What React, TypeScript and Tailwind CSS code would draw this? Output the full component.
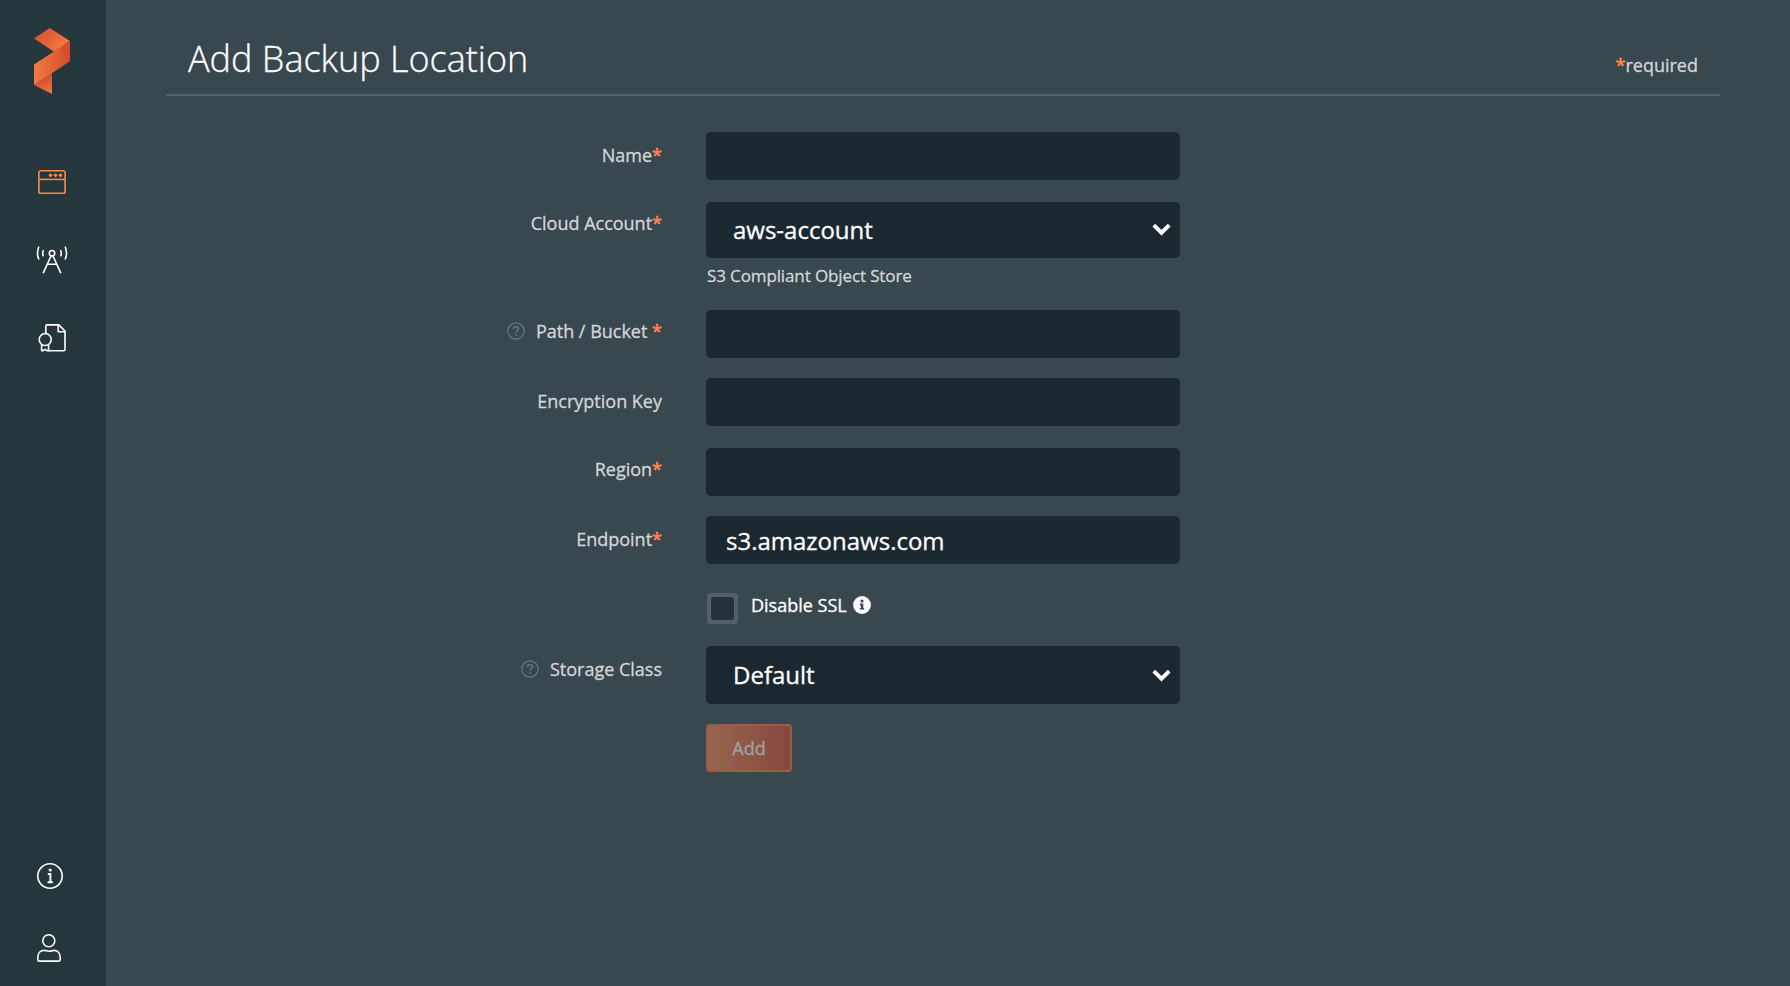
import type { ReactNode } from "react";

function Logo() {
  return (
    <svg width="36" height="66" viewBox="34 28 36 66" className="block">
      <defs>
        <linearGradient id="top" x1="0" y1="0" x2="1" y2="0.5">
          <stop offset="0.1" stopColor="#d4502e" />
          <stop offset="1" stopColor="#f47a42" />
        </linearGradient>
        <linearGradient id="ribbon" x1="0" y1="0" x2="1" y2="0">
          <stop offset="0" stopColor="#f47b43" />
          <stop offset="1" stopColor="#d24b2c" />
        </linearGradient>
        <linearGradient id="tail" x1="0.3" y1="0" x2="0.7" y2="1">
          <stop offset="0.2" stopColor="#cf4c2c" />
          <stop offset="1" stopColor="#ef743f" />
        </linearGradient>
      </defs>
      <path d="M52 73V94L34 85Z" fill="url(#tail)" />
      <path d="M49.700 28L70 41L54 51.800L34 38.400Z" fill="url(#top)" />
      <path d="M70 41V61.300L34 85V64.500Z" fill="url(#ribbon)" />
    </svg>
  );
}

function WindowIcon() {
  return (
    <svg width="28" height="24" viewBox="38 170 28 24" fill="none" stroke="#ff8550" strokeWidth="1.600" className="block">
      <rect x="38.900" y="170.800" width="26.200" height="22.400" rx="1.800" />
      <path d="M39 179.400H65" />
      <g fill="#ff8550" stroke="none">
        <circle cx="50.500" cy="175.200" r="1.700" />
        <circle cx="55.500" cy="175.200" r="1.700" />
        <circle cx="60.500" cy="175.200" r="1.700" />
      </g>
    </svg>
  );
}

function AntennaIcon() {
  return (
    <svg width="32" height="28" viewBox="36 246 32 28" fill="none" stroke="#fff" strokeWidth="1.600" strokeLinecap="round" className="block">
      <circle cx="52" cy="253.200" r="2.700" />
      <path d="M51 256L43.400 272.600M53 256L60.600 272.600M47.400 264.200H56.600" />
      <path d="M38.700 247.300Q36.300 253.200 38.700 259M65.300 247.300Q67.700 253.200 65.300 259" />
      <path d="M43.200 250.700Q42.200 253.200 43.200 255.700M60.800 250.700Q61.800 253.200 60.800 255.700" />
    </svg>
  );
}

function CertificateIcon() {
  return (
    <svg width="28" height="28" viewBox="38 324 28 28" fill="none" stroke="#fff" strokeWidth="1.600" strokeLinejoin="round" strokeLinecap="round" className="block">
      <path d="M45.800 333V326.200Q45.800 324.900 47.200 324.900H58.800L65 331V349.200Q65 350.700 63.500 350.700H48.500" />
      <path d="M58.200 324.900V331.700H65" />
      <circle cx="45.200" cy="339.500" r="6" />
      <path d="M41.600 344.800V350.600H43.300L45.200 349.300L47 350.600H48.600V344.800" />
    </svg>
  );
}

function InfoIcon() {
  return (
    <svg width="26" height="26" viewBox="0 0 26 26" fill="none" stroke="#fff" strokeWidth="1.600" className="block">
      <circle cx="13" cy="13" r="12.200" />
      <circle cx="13.200" cy="7" r="1.600" fill="#fff" stroke="none" />
      <path d="M10.800 11H13.400V19M10.600 19.200H15.900" strokeWidth="1.900" />
    </svg>
  );
}

function UserIcon() {
  return (
    <svg width="24" height="28" viewBox="0 0 24 28" fill="none" stroke="#fff" strokeWidth="1.600" strokeLinejoin="round" className="block">
      <circle cx="11.800" cy="6.800" r="6" />
      <path d="M0.800 23.500C0.800 19 3.500 16.400 7 16.400C9 16.400 10 17.300 11.900 17.300S14.800 16.400 17 16.400C20.500 16.400 23.200 19 23.200 23.500V25.800Q23.200 27.100 21.900 27.100H2.100Q0.800 27.100 0.800 25.800Z" />
    </svg>
  );
}

function HelpIcon() {
  return (
    <svg width="18" height="18" viewBox="0 0 18 18" fill="none" stroke="#6b777d" strokeWidth="1.200" className="block">
      <circle cx="9" cy="9" r="8.200" />
      <path d="M6.400 7C6.400 5.400 7.500 4.700 9 4.700S11.600 5.600 11.600 6.900C11.600 8.600 9.100 8.600 9.100 10.800" strokeWidth="1.400" />
      <circle cx="9.100" cy="13" r="0.900" fill="#6b777d" stroke="none" />
    </svg>
  );
}

function SolidInfoIcon() {
  return (
    <svg width="18" height="18" viewBox="0 0 18 18" className="block">
      <circle cx="9" cy="9" r="8.900" fill="#fff" />
      <circle cx="9" cy="5" r="1.600" fill="#38464d" />
      <path d="M6.900 7.600H10.300V12H11.200V13.600H6.900V12H7.800V9.200H6.900Z" fill="#38464d" />
    </svg>
  );
}

function Chevron() {
  return (
    <svg width="19" height="13" viewBox="0 0 19 13" className="block">
      <path d="M1.800 2.200L9.500 9.700L17.200 2.200" fill="none" stroke="#fff" strokeWidth="3.900" />
    </svg>
  );
}

const Star = () => <span className="text-[#ff8550] [-webkit-text-stroke:0.6px_#ff8550]">*</span>;

function Row({ label, gap, pad = "pt-[11px]", children }: { label?: ReactNode; gap: string; pad?: string; children: ReactNode }) {
  return (
    <div className={`flex items-start ${gap}`}>
      <div className={`flex w-[496px] shrink-0 items-center justify-end whitespace-pre text-[18px] leading-6 text-[#d3d6d8] ${pad}`}>{label}</div>
      <div className="ml-[44px] w-[474px] shrink-0">{children}</div>
    </div>
  );
}

function Field({ value = "" }: { value?: string }) {
  return (
    <div className="flex h-12 items-center rounded-[5px] bg-[#1b282f] pl-[20px] pt-[2px] text-[24px] leading-8 text-white">{value}</div>
  );
}

function Select({ value, size }: { value: string; size: string }) {
  return (
    <div className={`flex items-center justify-between rounded-[5px] bg-[#1b282f] pl-[27px] pr-[9px] text-[24px] leading-8 text-white ${size}`}>
      <span>{value}</span>
      <Chevron />
    </div>
  );
}

export default function App() {
  return (
    <div className="flex h-[986px] w-[1790px] overflow-hidden bg-[#39474e] font-['Open_Sans',sans-serif] [-webkit-text-stroke:0.3px_currentColor]">
      <nav className="flex w-[106px] shrink-0 flex-col bg-[#26363d]">
        <div className="ml-[34px] mt-[28px]"><Logo /></div>
        <div className="ml-[38px] mt-[76px]"><WindowIcon /></div>
        <div className="ml-[36px] mt-[52px]"><AntennaIcon /></div>
        <div className="ml-[38px] mt-[50px]"><CertificateIcon /></div>
        <div className="ml-[37px] mt-auto"><InfoIcon /></div>
        <div className="mb-[24px] ml-[37px] mt-[45px]"><UserIcon /></div>
      </nav>
      <main className="ml-[60px] w-[1554px]">
        <header className="flex h-24 justify-between border-b-2 border-[#53636a] pl-[22px] pr-[22px]">
          <h1 className="mt-[35px] text-[36px] font-light leading-[48px] text-white">Add Backup Location</h1>
          <div className="mt-[53px] text-[18px] leading-6 text-[#d3d6d8]"><Star />required</div>
        </header>
        <Row gap="mt-9" label={<>Name<Star /></>}><Field /></Row>
        <Row gap="mt-[22px]" pad="pt-[9px]" label={<>Cloud Account<Star /></>}>
          <Select value="aws-account" size="h-14 pb-px" />
          <div className="mt-[6px] h-6 whitespace-nowrap pl-px text-[17px] leading-6 tracking-[-0.12px] text-[#d3d6d8]">S3 Compliant Object Store</div>
        </Row>
        <Row gap="mt-[22px]" pad="pt-[9px]" label={<><span className="mr-[11px]"><HelpIcon /></span>Path / Bucket <Star /></>}><Field /></Row>
        <Row gap="mt-5" label="Encryption Key"><Field /></Row>
        <Row gap="mt-[22px]" pad="pt-[9px]" label={<>Region<Star /></>}><Field /></Row>
        <Row gap="mt-5" label={<>Endpoint<Star /></>}><Field value="s3.amazonaws.com" /></Row>
        <Row gap="mt-[29px]">
          <div className="flex items-start pl-px">
            <div className="flex size-[31px] items-center justify-center rounded-[3px] bg-[#526067]">
              <div className="size-[23px] rounded-[3px] bg-[#26333a]" />
            </div>
            <span className="ml-[13px] text-[18px] leading-6 text-white">Disable SSL</span>
            <span className="ml-[6px] mt-[3px]"><SolidInfoIcon /></span>
          </div>
        </Row>
        <Row gap="mt-[22px]" label={<><span className="mr-[11px]"><HelpIcon /></span>Storage Class</>}>
          <Select value="Default" size="h-[58px]" />
        </Row>
        <Row gap="mt-5">
          <button className="flex h-12 w-[86px] items-center justify-center rounded-[4px] border-2 border-[#995f46] bg-linear-to-r from-[#97654c] to-[#87483f] text-[18px] leading-6 text-[#9ca3a6]">Add</button>
        </Row>
      </main>
    </div>
  );
}
